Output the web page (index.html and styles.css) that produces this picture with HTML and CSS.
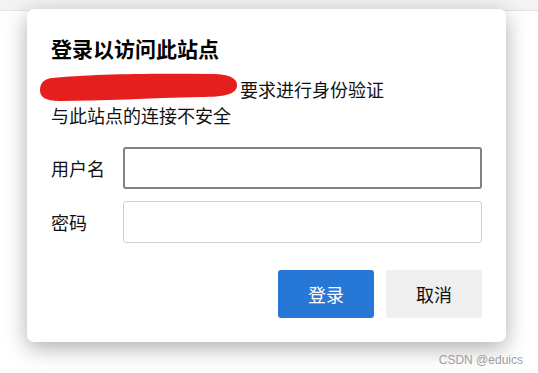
FILE: index.html
```html
<!DOCTYPE html>
<html lang="zh-CN">

<head>
    <meta charset="UTF-8">
    <title>登录以访问此站点</title>
    <link rel="stylesheet" href="styles.css">
</head>

<body>
    <div class="topbar"></div>

    <div class="dialog">
        <h1>登录以访问此站点</h1>
        <div class="msg">
            <!-- redacted host name -->
            <svg class="scribble" width="198" height="28" viewBox="0 0 198 28">
                <path d="M12 5 C 50 1, 110 0, 172 1 C 190 1, 198 6, 197 13 C 196 21, 186 24, 160 24 C 110 25, 60 28, 20 28 C 5 28, 0 24, 0 17 C 0 10, 4 6, 12 5 Z" fill="#e61e1e" />
            </svg>
            <span>要求进行身份验证</span>
        </div>
        <p class="msg-line">与此站点的连接不安全</p>

        <form class="login-form">
            <label for="user">用户名</label>
            <input type="text" id="user" class="focused">
            <label for="pass">密码</label>
            <input type="password" id="pass">

            <div class="actions">
                <button type="submit" class="btn btn-primary">登录</button>
                <button type="button" class="btn">取消</button>
            </div>
        </form>
    </div>

    <div class="watermark">CSDN @eduics</div>
</body>

</html>
```

FILE: styles.css
```css
body {
    margin: 0;
    background-color: #fff;
    font-family: "Noto Sans CJK SC", "Microsoft YaHei", sans-serif;
    color: #111;
    height: 373px;
    overflow: hidden;
    position: relative;
}

.topbar {
    height: 10px;
    background-color: #f3f3f3;
    border-bottom: 1px solid #e3e3e3;
}

.dialog {
    width: 431px;
    margin: -2px 0 0 27px;
    padding: 24px;
    background-color: #fff;
    border-radius: 7px;
    box-shadow: 0 6px 22px rgba(0, 0, 0, 0.32);
}

h1 {
    margin: 0;
    font-size: 21px;
    font-weight: bold;
    line-height: 30px;
    color: #000;
}

.msg {
    display: flex;
    align-items: center;
    height: 26px;
    margin-top: 13px;
    font-size: 18px;
    line-height: 26px;
}

.scribble {
    display: block;
    flex-shrink: 0;
    margin: -4px 2px 0 -11px;
}

.msg-line {
    margin: 0;
    font-size: 18px;
    line-height: 26px;
}

.login-form {
    display: grid;
    grid-template-columns: 72px 1fr;
    row-gap: 12px;
    align-items: center;
    margin-top: 19px;
    font-size: 18px;
}

.login-form input {
    height: 42px;
    box-sizing: border-box;
    border: 1px solid #cfcfcf;
    border-radius: 3px;
    padding: 0 8px;
    font-size: 16px;
    outline: none;
}

.login-form input.focused {
    border: 2px solid #7f8387;
}

.actions {
    grid-column: 1 / 3;
    display: flex;
    justify-content: flex-end;
    gap: 12px;
    margin-top: 15px;
}

.btn {
    width: 96px;
    height: 48px;
    border: none;
    border-radius: 3px;
    background-color: #efefef;
    color: #111;
    font-family: inherit;
    font-size: 18px;
    cursor: pointer;
}

.btn-primary {
    background-color: #2777d6;
    color: #fff;
}

.watermark {
    position: absolute;
    right: 15px;
    bottom: 6px;
    font-family: "Liberation Sans", Arial, sans-serif;
    font-size: 12px;
    color: #a0a0a0;
}
```
